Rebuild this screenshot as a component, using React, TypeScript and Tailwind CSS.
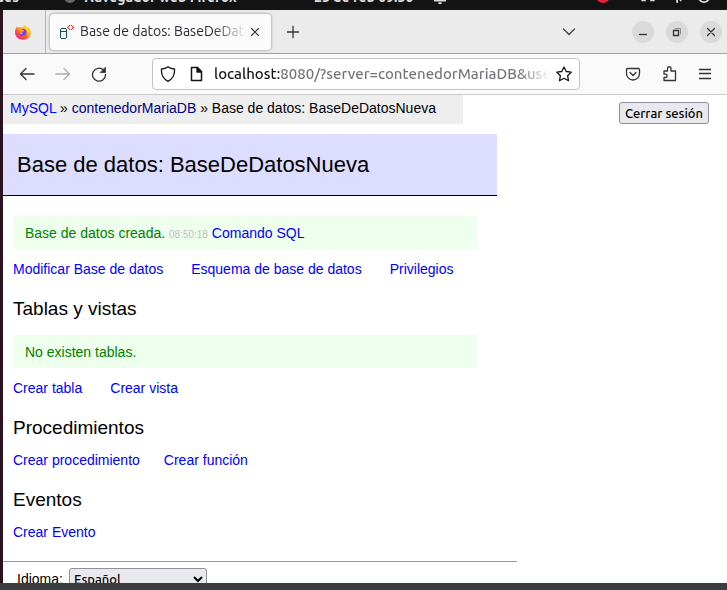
import type { ReactNode } from "react";

const uiFont = "font-['Ubuntu','Noto_Sans',sans-serif]";

function Icon({ children, className = "", size = 16 }: { children: ReactNode; className?: string; size?: number }) {
  return (
    <svg
      width={size}
      height={size}
      viewBox="0 0 16 16"
      fill="none"
      stroke="currentColor"
      strokeWidth="1.3"
      strokeLinecap="round"
      strokeLinejoin="round"
      className={`shrink-0 ${className}`}
      aria-hidden="true"
    >
      {children}
    </svg>
  );
}

function FirefoxLogo() {
  return (
    <svg width="16" height="16" viewBox="0 0 16 16" className="shrink-0" aria-hidden="true">
      <defs>
        <linearGradient id="fox" x1="0.85" y1="0.1" x2="0.2" y2="0.95">
          <stop offset="0" stopColor="#fff04a" />
          <stop offset="0.35" stopColor="#ffb327" />
          <stop offset="0.65" stopColor="#ff5a36" />
          <stop offset="1" stopColor="#e8208a" />
        </linearGradient>
      </defs>
      <path
        d="M10 0.2c.4 1.600 1.500 2.300 2.500 3.300.300-.3.200-.8.200-1.200 1.800 1.500 3.200 3.800 3.200 6.200 0 4.200-3.500 7.300-7.900 7.300S0 12.500 0 8.300C0 5.700 1 3.700 2.500 2.100c0 .7.100 1.200.4 1.700C4.500 2.800 7.800 3.600 8 3.200 8.300 2 8.900 1 10 .2z"
        fill="url(#fox)"
      />
      <circle cx="7.900" cy="8.300" r="3.500" fill="#7340dc" />
      <path d="M3.500 5.200c1.700-.7 3.300-.3 4.100.6 1 .2 1.600.4 1.600.9-.2.800-1.700.7-2.100 1.200-.4.600.2 1.600 1.300 1.500-1.400 1.300-3.700.600-4-1.200-.2-1 .1-1.700-.9-3z" fill="#ff9a2c" />
    </svg>
  );
}

function DatabaseFavicon() {
  return (
    <svg width="16" height="16" viewBox="0 0 16 16" className="shrink-0" shapeRendering="crispEdges" aria-hidden="true">
      <path d="M2 4.500h5M1.500 5v9M7.500 5v9M2 7.500h5M2 14.500h5" stroke="#0d4f60" fill="none" />
      <path
        d="M9 2h1v1H9zM8 3h1v1H8zM9 4h1v1H9zM10 1h1v1h-1zM10 5h1v1h-1zM12 1h1v1h-1zM13 2h1v1h-1zM14 3h1v1h-1zM13 4h1v1h-1zM12 5h1v1h-1z"
        fill="#ee1111"
      />
    </svg>
  );
}

function ToolButton({ label, className = "", children }: { label: string; className?: string; children: ReactNode }) {
  return (
    <button type="button" aria-label={label} className={`flex shrink-0 items-center justify-center ${className}`}>
      {children}
    </button>
  );
}

function DesktopBar() {
  return (
    <div className={`flex h-[10px] shrink-0 items-end overflow-hidden bg-[#131313] pb-[3px] text-[14px] leading-[20px] font-bold text-[#dedede] ${uiFont}`}>
      <div className="flex w-[64px] justify-start overflow-hidden">
        <span className="-ml-[58px] whitespace-nowrap">Actividades</span>
      </div>
      <span className="mb-[4px] size-[12px] shrink-0 rounded-full bg-[#666]" />
      <span className="ml-2 w-[230px] whitespace-nowrap">Navegador web Firefox</span>
      <span className="whitespace-nowrap">25 de feb 09:50</span>
      <Icon size={14} className="mb-[3px] ml-5">
        <path d="M2 12h12M7 15h2" strokeWidth="2" />
      </Icon>
      <span className="ml-auto mb-[4px] size-[14px] shrink-0 rounded-full bg-[#e8213a]" />
      <Icon size={14} className="mb-[4px] ml-[31px]">
        <path d="M3 8v6M13 8v6" strokeWidth="5" strokeLinecap="butt" />
      </Icon>
      <Icon size={14} className="mb-[4px] ml-[16px]">
        <path d="M3 8l4 5v2M11 8v5" strokeWidth="2" />
      </Icon>
      <Icon size={14} className="mr-[16px] mb-[4px] ml-[12px]">
        <circle cx="8" cy="9" r="6" strokeWidth="2" />
      </Icon>
    </div>
  );
}

function TabStrip() {
  return (
    <div className="flex h-[44px] shrink-0 items-center border-b border-[#a3a3a3] bg-[#ebebeb]">
      <div className="flex h-full w-[43px] shrink-0 items-center justify-center border-r border-[#b5b5b5] pr-[2px]">
        <FirefoxLogo />
      </div>
      <div className="ml-[4px] flex h-[36px] w-[221px] shrink-0 items-center rounded bg-[#fbfbfb] pr-2 pl-[9px] shadow-[0_0_3px_rgba(0,0,0,0.45)]">
        <DatabaseFavicon />
        <span className={`ml-[5px] min-w-0 flex-1 overflow-hidden mask-r-from-80% text-[14px] whitespace-nowrap text-[#2b2a33] ${uiFont}`}>
          Base de datos: BaseDeDatosNueva
        </span>
        <ToolButton label="Cerrar pestaña" className="size-4">
          <Icon size={16} className="text-[#333]">
            <path d="M4.500 4.500l7 7M11.500 4.500l-7 7" strokeWidth="1.100" />
          </Icon>
        </ToolButton>
      </div>
      <ToolButton label="Nueva pestaña" className="ml-[14px] size-4">
        <Icon className="text-[#333]">
          <path d="M8 2.500v11M2.500 8h11" />
        </Icon>
      </ToolButton>
      <ToolButton label="Listar pestañas" className="mr-[55px] ml-auto size-4">
        <Icon className="text-[#444]">
          <path d="M2.500 5l5.500 5.500L13.500 5" />
        </Icon>
      </ToolButton>
      <div className="mr-[5px] flex shrink-0 gap-[12px] text-[#333]">
        <ToolButton label="Minimizar" className="size-[22px] rounded-full bg-[#dadada]">
          <Icon>
            <path d="M4 10.500h8" strokeLinecap="butt" />
          </Icon>
        </ToolButton>
        <ToolButton label="Restaurar" className="size-[22px] rounded-full bg-[#dadada]">
          <Icon>
            <path d="M4.500 6.500h5v5h-5z" strokeLinejoin="miter" />
            <path d="M6 4.500h5.500V10" stroke="#888" strokeWidth="1" strokeLinejoin="miter" />
          </Icon>
        </ToolButton>
        <ToolButton label="Cerrar" className="size-[22px] rounded-full bg-[#dadada]">
          <Icon>
            <path d="M4.500 4.500l7 7M11.500 4.500l-7 7" />
          </Icon>
        </ToolButton>
      </div>
    </div>
  );
}

function NavBar() {
  return (
    <div className="flex h-[41px] shrink-0 items-center border-b border-[#cacaca] bg-[#fafafa] pr-[14px] pl-4 text-[#333]">
      <ToolButton label="Atrás" className="size-4">
        <Icon>
          <path d="M15 8H1.500M7 2.500L1.500 8 7 13.500" />
        </Icon>
      </ToolButton>
      <ToolButton label="Adelante" className="ml-5 size-4 text-[#ababab]">
        <Icon>
          <path d="M1 8h13.500M9 2.500L14.500 8 9 13.500" />
        </Icon>
      </ToolButton>
      <ToolButton label="Recargar" className="ml-5 size-4">
        <Icon>
          <path d="M14.500 8.500A6.500 6.500 0 1 1 12.500 4" />
          <path d="M14.500 1.500v5h-5z" fill="currentColor" strokeWidth="0.800" />
        </Icon>
      </ToolButton>
      <div className="ml-[45px] flex h-[32px] min-w-0 flex-1 items-center rounded border border-[#c2c2c2] bg-white px-[7px] text-[#15141a]">
        <Icon>
          <path d="M8 .8c1.800 1.500 4 2.100 6.500 2.200C15 9 12.500 13 8 15.300 3.500 13 1 9 1.500 3 4 2.900 6.200 2.300 8 .8z" />
        </Icon>
        <Icon className="ml-3">
          <path d="M3.500 1.500h6l4 4v9h-10z" strokeWidth="1.500" />
          <path d="M9 1.500v4.500h4.500z" fill="currentColor" />
        </Icon>
        <input
          type="text"
          aria-label="Dirección"
          defaultValue="localhost:8080/?server=contenedorMariaDB&username=root"
          className={`ml-[10px] min-w-0 flex-1 bg-[linear-gradient(to_right,#15141a_65px,#737378_65px,#737378_305px,transparent_336px)] bg-clip-text text-[15px] font-medium text-transparent outline-none ${uiFont}`}
        />
        <Icon>
          <path d="M8 1l2.200 4.500 5 .7-3.600 3.500.9 5L8 12.300 3.500 14.700l.9-5L.8 6.200l5-.7z" />
        </Icon>
      </div>
      <ToolButton label="Guardar en Pocket" className="ml-[45px] size-4">
        <Icon>
          <path d="M2.500 2.500h11a1 1 0 0 1 1 1v4a6.500 6.500 0 0 1-13 0v-4a1 1 0 0 1 1-1z" />
          <path d="M5 6.500l3 3 3-3" />
        </Icon>
      </ToolButton>
      <ToolButton label="Extensiones" className="ml-5 size-4">
        <Icon>
          <path d="M3 5h3.500V2.500a1.700 1.700 0 0 1 3.500 0V5h4.500v9.500H3V11.500h1.500a1.600 1.600 0 0 0 0-3.300H3z" />
        </Icon>
      </ToolButton>
      <ToolButton label="Menú" className="ml-5 size-4">
        <Icon>
          <path d="M2 3.500h12M2 7.500h12M2 12.500h12" strokeLinecap="butt" />
        </Icon>
      </ToolButton>
    </div>
  );
}

function Message({ children }: { children: ReactNode }) {
  return <div className="max-w-[464px] bg-[#eeffee] px-3 pt-[7px] pb-[6px] leading-[20px] text-[#008000]">{children}</div>;
}

function Link({ children, className = "text-[#0000ff]" }: { children: ReactNode; className?: string }) {
  return (
    <a href="#" className={className}>
      {children}
    </a>
  );
}

function Links({ items, className = "gap-7" }: { items: string[]; className?: string }) {
  return (
    <p className={`flex ${className}`}>
      {items.map((item) => (
        <Link key={item}>{item}</Link>
      ))}
    </p>
  );
}

function Page() {
  return (
    <main className="min-h-0 flex-1 overflow-hidden bg-white font-['Liberation_Sans',sans-serif] text-[14px] leading-[20px] text-black">
      <div className="flex items-end justify-between">
        <p className="w-[460px] bg-[#eeeeee] pt-[3px] pb-[6px] pl-[7px]">
          <Link>MySQL</Link> » <Link className="text-[#000080]">contenedorMariaDB</Link> » Base de datos: BaseDeDatosNueva
        </p>
        <button
          type="button"
          className={`mr-[18px] h-[22px] rounded-[3px] border border-[#8f8f9d] bg-[#e9e9ed] px-[5px] text-[13px] leading-[20px] font-medium ${uiFont}`}
        >
          Cerrar sesión
        </button>
      </div>
      <h1 className="mt-[10px] max-w-[494px] border-b border-black bg-[#ddddff] px-[14px] pt-4 pb-[15px] text-[22px] leading-[30px]">
        Base de datos: BaseDeDatosNueva
      </h1>
      <div className="px-[10px] pt-5">
        <Message>
          Base de datos creada. <span className="text-[10px] leading-none text-[#c0c0c0]">08:50:18</span> <Link>Comando SQL</Link>
        </Message>
        <div className="mt-[10px]">
          <Links items={["Modificar Base de datos", "Esquema de base de datos", "Privilegios"]} />
        </div>
        <h2 className="mt-[18px] mb-[14px] text-[19px] leading-[24px]">Tablas y vistas</h2>
        <Message>No existen tablas.</Message>
        <div className="mt-[10px]">
          <Links items={["Crear tabla", "Crear vista"]} />
        </div>
        <h2 className="mt-[18px] text-[19px] leading-[24px]">Procedimientos</h2>
        <div className="mt-[10px]">
          <Links items={["Crear procedimiento", "Crear función"]} className="gap-6" />
        </div>
        <h2 className="mt-[18px] text-[19px] leading-[24px]">Eventos</h2>
        <div className="mt-[10px]">
          <Links items={["Crear Evento"]} />
        </div>
      </div>
      <div className="mt-[19px] flex max-w-[514px] items-center border-t border-[#999] px-[14px] pt-[6px]">
        <label htmlFor="language">Idioma:</label>
        <select
          id="language"
          defaultValue="es"
          className={`ml-[6px] h-[22px] w-[138px] rounded-[3px] border border-[#8f8f9d] bg-[#e9e9ed] text-[13px] leading-[16px] font-medium ${uiFont}`}
        >
          <option value="es">Español</option>
          <option value="en">English</option>
        </select>
      </div>
    </main>
  );
}

export default function App() {
  return (
    <div className="flex h-screen flex-col overflow-hidden">
      <DesktopBar />
      <div className="flex min-h-0 flex-1 flex-col border-l-[3px] border-[#2a1220]">
        <TabStrip />
        <NavBar />
        <Page />
      </div>
      <div className="h-[7px] shrink-0 bg-[#3b3d3e]" />
    </div>
  );
}
